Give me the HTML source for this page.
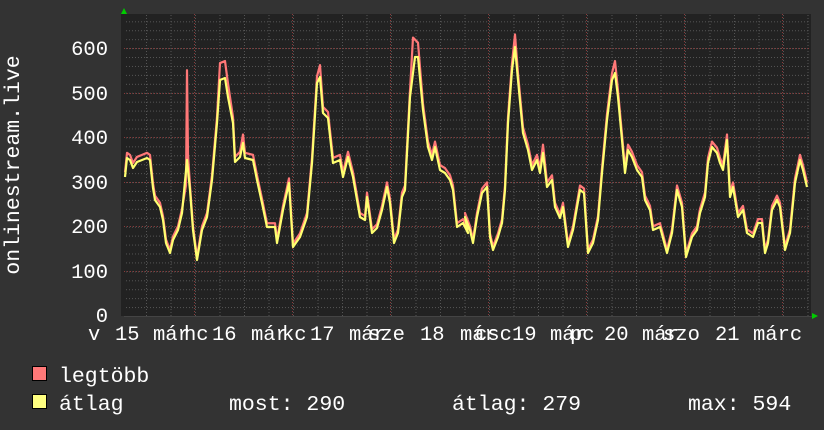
<!DOCTYPE html>
<html><head><meta charset="utf-8"><style>
html,body{margin:0;padding:0;background:#333;}
svg{display:block;}
text{font-family:"Liberation Mono","DejaVu Sans Mono",monospace;fill:#fff;font-size:20.5px;}
.lg{font-size:21.5px;}
</style></head><body>
<svg width="824" height="430" viewBox="0 0 824 430" xmlns="http://www.w3.org/2000/svg">
<defs>
<pattern id="gv" x="121.5" y="0" width="24.5" height="430" patternUnits="userSpaceOnUse">
<line x1="0.5" y1="0" x2="0.5" y2="430" stroke="#555" stroke-dasharray="1,2"/>
</pattern>
<pattern id="gh" x="0" y="316" width="824" height="8.93" patternUnits="userSpaceOnUse">
<line x1="0" y1="0.5" x2="824" y2="0.5" stroke="#555" stroke-dasharray="1,2"/>
</pattern>
</defs>
<rect x="0" y="0" width="824" height="430" fill="#333"/>
<rect x="121" y="14" width="690" height="302" fill="#222"/>
<rect x="124" y="14" width="686" height="302" fill="url(#gv)"/>
<rect x="124" y="14" width="686" height="302" fill="url(#gh)"/>
<g stroke="#8a3a3a" stroke-dasharray="1,2">
<line x1="124" y1="48.5" x2="810" y2="48.5"/><line x1="124" y1="93.5" x2="810" y2="93.5"/>
<line x1="124" y1="137.5" x2="810" y2="137.5"/><line x1="124" y1="182.5" x2="810" y2="182.5"/>
<line x1="124" y1="226.5" x2="810" y2="226.5"/><line x1="124" y1="271.5" x2="810" y2="271.5"/>
<line x1="194.5" y1="14" x2="194.5" y2="316"/><line x1="292.5" y1="14" x2="292.5" y2="316"/>
<line x1="390.5" y1="14" x2="390.5" y2="316"/><line x1="488.5" y1="14" x2="488.5" y2="316"/>
<line x1="586.5" y1="14" x2="586.5" y2="316"/><line x1="684.5" y1="14" x2="684.5" y2="316"/>
<line x1="782.5" y1="14" x2="782.5" y2="316"/>
</g>
<line x1="124" y1="316.5" x2="812" y2="316.5" stroke="#444"/>
<polygon points="121,14 127,14 124,8" fill="#0c0"/>
<polygon points="812,313 812,319 818,316" fill="#0c0"/>
<g fill="none" stroke-width="2.2" stroke-linejoin="round">
<polyline transform="translate(0,314) scale(1,1.02) translate(0,-316)" stroke="#ff7878" points="125,177 127,158 130,160 133,168 137,162 142,160 147,158 150,160 153,188 155,200 160,207 163,220 166,243 170,253 173,240 178,230 182,213 186,190 187,77 188,160 190,190 193,230 197,260 202,230 207,217 212,180 217,123 220,70 225,68 228,90 233,123 235,162 240,157 243,140 245,158 253,160 257,180 262,203 267,227 275,227 277,243 283,210 289,183 293,247 300,237 307,217 312,163 317,83 320,72 323,113 328,118 333,163 340,160 343,177 348,157 353,177 360,217 365,220 367,197 372,233 377,228 382,210 387,187 390,203 394,243 398,233 402,197 405,190 410,97 413,45 418,50 423,110 428,147 432,160 435,147 440,170 445,173 450,180 453,190 457,227 463,223 468,233 465,217 470,230 473,243 477,217 482,193 487,187 490,237 493,250 498,237 502,223 505,190 508,123 512,70 515,42 518,80 523,133 528,150 532,170 537,160 540,173 543,150 547,187 552,180 555,207 560,218 563,207 568,247 573,230 580,190 584,193 588,253 593,243 598,220 602,173 607,120 612,80 615,68 618,97 622,140 625,173 628,150 632,157 637,170 642,177 645,200 650,210 653,230 660,227 667,253 672,233 677,190 682,207 686,257 692,237 697,230 700,213 705,197 708,163 712,147 717,153 720,163 723,170 727,140 730,197 733,187 738,217 743,210 747,233 753,237 758,223 762,223 765,253 768,243 772,210 777,200 780,207 785,250 790,233 795,183 800,160 803,170 807,187"/>
<polyline stroke="#ffff70" points="125,177 127,158 130,160 133,168 137,162 142,160 147,158 150,160 153,188 155,200 160,207 163,220 166,243 170,253 173,240 178,230 182,213 187,160 190,190 193,230 197,260 202,230 207,217 212,180 217,123 220,80 225,78 228,97 233,123 235,162 240,157 243,143 245,158 253,160 257,180 262,203 267,227 275,227 277,243 283,210 289,183 293,247 300,237 307,217 312,163 317,83 320,77 323,113 328,118 333,163 340,160 343,177 348,157 353,177 360,217 365,220 367,197 372,233 377,228 382,210 387,187 390,203 394,243 398,233 402,197 405,190 410,97 415,57 418,57 423,110 428,147 432,160 435,147 440,170 445,173 450,180 453,190 457,227 463,223 468,233 465,217 470,230 473,243 477,217 482,193 487,187 490,237 493,250 498,237 502,223 505,190 508,123 512,70 515,47 518,80 523,133 528,150 532,170 537,160 540,173 543,153 547,187 552,180 555,207 560,218 563,207 568,247 573,230 580,190 584,193 588,253 593,243 598,220 602,173 607,120 612,80 615,73 618,97 622,140 625,173 628,150 632,157 637,170 642,177 645,200 650,210 653,230 660,227 667,253 672,233 677,190 682,207 686,257 692,237 697,230 700,213 705,197 708,163 712,147 717,153 720,163 723,170 727,140 730,197 733,187 738,217 743,210 747,233 753,237 758,223 762,223 765,253 768,243 772,210 777,200 780,207 785,250 790,233 795,183 800,160 803,170 807,187"/>
</g>
<g text-anchor="end">
<text x="108" y="55">600</text><text x="108" y="100">500</text><text x="108" y="144">400</text>
<text x="108" y="189">300</text><text x="108" y="233">200</text><text x="108" y="278">100</text>
<text x="108" y="322">0</text>
</g>
<text transform="translate(19,165) rotate(-90)" text-anchor="middle" style="font-size:21.5px">onlinestream.live</text>
<g>
<text x="88" y="340">v</text><text x="115" y="340">15</text><text x="153" y="340">már</text><text x="184" y="340">hc</text>
<text x="212" y="340">16</text><text x="251" y="340">már</text><text x="282" y="340">kc</text>
<text x="310" y="340">17</text><text x="349" y="340">már</text><text x="368" y="340">sze</text>
<text x="420" y="340">18</text><text x="460" y="340">már</text><text x="475" y="340">csc</text>
<text x="512" y="340">19</text><text x="550" y="340">már</text><text x="570" y="340">pc</text>
<text x="604" y="340">20</text><text x="642" y="340">már</text><text x="663" y="340">szo</text>
<text x="715" y="340">21</text><text x="753" y="340">márc</text>
</g>
<rect x="32.5" y="366.5" width="14" height="14" fill="#ff7878" stroke="#000"/>
<rect x="32.5" y="394.5" width="14" height="14" fill="#ffff80" stroke="#000"/>
<text class="lg" x="59" y="382">legtöbb</text>
<text class="lg" x="59" y="410">átlag</text>
<text class="lg" x="229" y="410">most: 290</text>
<text class="lg" x="452" y="410">átlag: 279</text>
<text class="lg" x="688" y="410">max: 594</text>
</svg>
</body></html>
